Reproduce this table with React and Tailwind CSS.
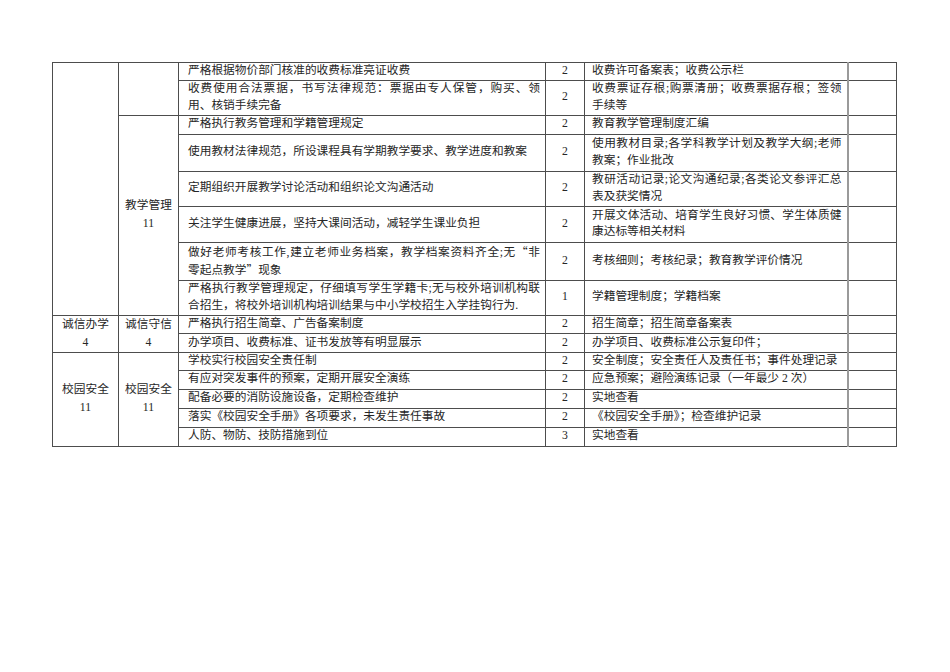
import React from 'react';

const font = { fontFamily: '"Liberation Serif", "Noto Sans CJK SC", serif' };

// full-width quote marks, taken from the CJK font instead of Liberation Serif
const Q = ({ c }) => <span className="font-['Noto_Sans_CJK_SC',sans-serif]">{c}</span>;

// a line is a string/element, or { s: ... } when the line is spread over the full cell width
const Lines = ({ lines }) =>
  lines.map((l, i) =>
    l && l.s ? (
      <div key={i} className="text-justify [text-align-last:justify]">
        {l.s}
      </div>
    ) : (
      <div key={i}>{l}</div>
    )
  );

const rows = [
  { h: 'h-[17px]', item: ['严格根据物价部门核准的收费标准亮证收费'], score: '2', ref: ['收费许可备案表；收费公示栏'] },
  {
    h: 'h-[35px]',
    item: [{ s: '收费使用合法票据，书写法律规范：票据由专人保管，购买、领' }, '用、核销手续完备'],
    score: '2',
    ref: [{ s: '收费票证存根;购票清册；收费票据存根；签领' }, '手续等'],
  },
  { h: 'h-[19px]', item: ['严格执行教务管理和学籍管理规定'], score: '2', ref: ['教育教学管理制度汇编'] },
  {
    h: 'h-[37px]',
    item: ['使用教材法律规范，所设课程具有学期教学要求、教学进度和教案'],
    score: '2',
    ref: [{ s: '使用教材目录;各学科教学计划及教学大纲;老师' }, '教案；作业批改'],
  },
  {
    h: 'h-[35px]',
    item: ['定期组织开展教学讨论活动和组织论文沟通活动'],
    score: '2',
    ref: [{ s: '教研活动记录;论文沟通纪录;各类论文参评汇总' }, '表及获奖情况'],
  },
  {
    h: 'h-[36px]',
    item: ['关注学生健康进展，坚持大课间活动，减轻学生课业负担'],
    score: '2',
    ref: [{ s: '开展文体活动、培育学生良好习惯、学生体质健' }, '康达标等相关材料'],
  },
  {
    h: 'h-[35px]',
    item: [
      { s: <>做好老师考核工作,建立老师业务档案，教学档案资料齐全;无<Q c="“" />非</> },
      <>零起点教学<Q c="”" />现象</>,
    ],
    score: '2',
    ref: ['考核细则；考核纪录；教育教学评价情况'],
  },
  {
    h: 'h-[35px]',
    item: [{ s: '严格执行教学管理规定，仔细填写学生学籍卡;无与校外培训机构联' }, '合招生，将校外培训机构培训结果与中小学校招生入学挂钩行为.'],
    score: '1',
    ref: ['学籍管理制度；学籍档案'],
  },
  { h: 'h-[18px]', item: ['严格执行招生简章、广告备案制度'], score: '2', ref: ['招生简章；招生简章备案表'] },
  { h: 'h-[18px]', item: ['办学项目、收费标准、证书发放等有明显展示'], score: '2', ref: ['办学项目、收费标准公示复印件；'] },
  { h: 'h-[18px]', item: ['学校实行校园安全责任制'], score: '2', ref: ['安全制度；安全责任人及责任书；事件处理记录'] },
  { h: 'h-[19px]', item: ['有应对突发事件的预案，定期开展安全演练'], score: '2', ref: ['应急预案；避险演练记录（一年最少 2 次）'] },
  { h: 'h-[19px]', item: ['配备必要的消防设施设备，定期检查维护'], score: '2', ref: ['实地查看'] },
  { h: 'h-[19px]', item: ['落实《校园安全手册》各项要求，未发生责任事故'], score: '2', ref: ['《校园安全手册》；检查维护记录'] },
  { h: 'h-[19px]', item: ['人防、物防、技防措施到位'], score: '3', ref: ['实地查看'] },
];

// first two columns, merged over several rows
const merged = {
  0: [
    { span: 8, text: null },
    { span: 2, text: null },
  ],
  2: [null, { span: 6, text: ['教学管理', '11'] }],
  8: [
    { span: 2, text: ['诚信办学', '4'] },
    { span: 2, text: ['诚信守信', '4'] },
  ],
  10: [
    { span: 5, text: ['校园安全', '11'] },
    { span: 5, text: ['校园安全', '11'] },
  ],
};

const cell = 'border border-[#4d4d4d] p-0 align-middle';

export default function App() {
  return (
    <div className="w-[950px] h-[672px] bg-white pl-[52px] pt-[62px]" style={font}>
      <table className="w-[844px] table-fixed border-collapse text-[11.7px] leading-[16.5px] text-[#262626]">
        <colgroup>
          <col className="w-[66px]" />
          <col className="w-[60px]" />
          <col className="w-[367px]" />
          <col className="w-[39px]" />
          <col className="w-[263px]" />
          <col className="w-[49px]" />
        </colgroup>
        <tbody>
          {rows.map((r, i) => (
            <tr key={i} className={r.h}>
              {merged[i] &&
                merged[i].map((m, j) =>
                  m ? (
                    <td key={j} rowSpan={m.span} className={`${cell} text-center`}>
                      {m.text && (
                        <div className="leading-[18px]">
                          <div>{m.text[0]}</div>
                          <div>{m.text[1]}</div>
                        </div>
                      )}
                    </td>
                  ) : null
                )}
              <td className={`${cell} pl-[9px] pr-[5px]`}>
                <Lines lines={r.item} />
              </td>
              <td className={`${cell} text-center`}>{r.score}</td>
              <td className={`${cell} pl-[7px] pr-[5px]`}>
                <Lines lines={r.ref} />
              </td>
              <td className={`${cell} border-l-2 border-l-[#9a9a9a]`}></td>
            </tr>
          ))}
        </tbody>
      </table>
    </div>
  );
}
